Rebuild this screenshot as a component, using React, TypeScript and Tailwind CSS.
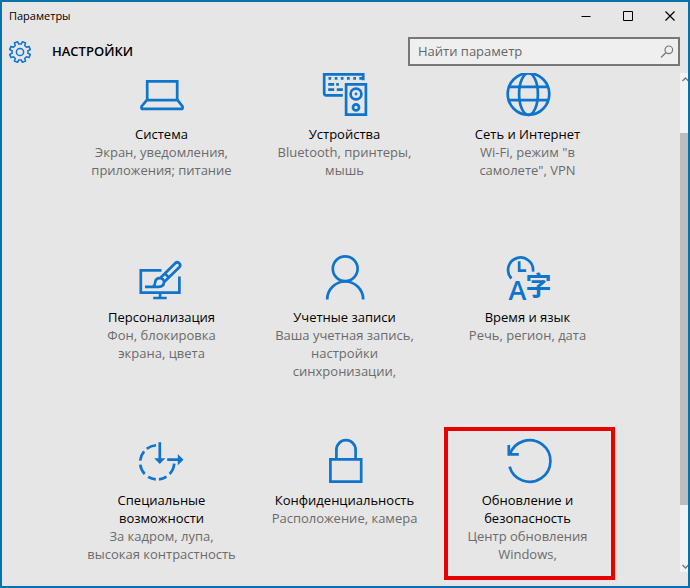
import { ReactNode } from 'react';

interface Category {
  title: string;
  description: string;
  icon: ReactNode;
  highlighted?: boolean;
}

// Outline of a cog, centred on 0,0
function cogPath(teeth: number, outer: number, inner: number) {
  const step = (Math.PI * 2) / teeth;
  const points: string[] = [];
  for (let i = 0; i < teeth; i++) {
    const mid = i * step - Math.PI / 2 + step / 2;
    [[inner, -0.3], [outer, -0.21], [outer, 0.21], [inner, 0.3]].forEach(([r, k]) => {
      const a = mid + k * step;
      points.push(`${(r * Math.cos(a)).toFixed(2)} ${(r * Math.sin(a)).toFixed(2)}`);
    });
  }
  return `M${points.join('L')}Z`;
}

function TileIcon({ children }: { children: ReactNode }) {
  return (
    <svg
      viewBox="0 0 44 44"
      className="h-11 w-11 shrink-0 overflow-visible text-[#0f74cb]"
      fill="none"
      stroke="currentColor"
      strokeWidth="2.7"
      aria-hidden="true"
    >
      {children}
    </svg>
  );
}

const categories: Category[] = [
  {
    title: 'Система',
    description: 'Экран, уведомления, приложения; питание',
    icon: (
      <TileIcon>
        <path d="M7.2 27V8.3h30V27" />
        <path d="M6.8 27.2h30.8l5 6.3v1.2q0 1.2-1.3 1.2H2.8q-1.3 0-1.3-1.2v-1.2z" strokeLinejoin="round" />
      </TileIcon>
    ),
  },
  {
    title: 'Устройства',
    description: 'Bluetooth, принтеры, мышь',
    icon: (
      <TileIcon>
        <path d="M19.8 22.3H3.2q-2 0-2-2V1.3h39v6" />
        <path d="M5.5 5.4h2.7M11.7 5.4h2.7M17.8 5.4h2.7M24 5.4h2.7M30.3 5.4H33M36.3 5.4H39M5.2 11.3h6M13.2 11.3h2.7M5.2 16.7h6M13.8 16.7h6" />
        <path d="M23.1 11.3h19.8v30.4H23.1z" />
        <circle cx="33" cy="21" r="5.4" />
        <circle cx="33" cy="21" r="1.4" fill="currentColor" stroke="none" />
        <circle cx="33" cy="34.4" r="3" />
      </TileIcon>
    ),
  },
  {
    title: 'Сеть и Интернет',
    description: 'Wi-Fi, режим "в самолете", VPN',
    icon: (
      <TileIcon>
        <circle cx="22.5" cy="21" r="20.8" />
        <ellipse cx="22.5" cy="21" rx="9.4" ry="20.8" />
        <path d="M3 13.9h39M3 27.2h39" />
      </TileIcon>
    ),
  },
  {
    title: 'Персонализация',
    description: 'Фон, блокировка экрана, цвета',
    icon: (
      <TileIcon>
        <path d="M21.5 14.3H.8v22.4h38.6V20.5M20.1 37v5M13.2 42h13.5" />
        <path d="M5 30.8h13.5c3.6 0 5.5-2 5.5-4.7 0-2.3-1.8-4-4.1-4-3 0-4.6 2-4.8 4.7-.1 2-.8 3.2-2.3 4" />
        <path d="M20.6 21.8 35.2 7.2a2.9 2.9 0 0 1 4.1 4.1L24.4 25.8M25 17.6l4 4" />
      </TileIcon>
    ),
  },
  {
    title: 'Учетные записи',
    description: 'Ваша учетная запись, настройки синхронизации,',
    icon: (
      <TileIcon>
        <circle cx="22.2" cy="12.8" r="12.4" />
        <path d="M4.2 43.5a18 18 0 0 1 36 0" />
      </TileIcon>
    ),
  },
  {
    title: 'Время и язык',
    description: 'Речь, регион, дата',
    icon: (
      <TileIcon>
        <path d="M5.4 22.5A12.5 12.5 0 1 1 27 15.6" />
        <path d="M13.2 5.3v9.4h7" />
        <g fill="currentColor" stroke="none">
          <text x="2.6" y="43.5" className="font-['Open_Sans'] text-[27px] font-semibold">A</text>
          <text x="19.6" y="39" className="font-['Noto_Sans_CJK_SC'] text-[26px] font-bold">字</text>
        </g>
      </TileIcon>
    ),
  },
  {
    title: 'Специальные возможности',
    description: 'За кадром, лупа, высокая контрастность',
    icon: (
      <TileIcon>
        <circle
          cx="17.2"
          cy="23.3"
          r="17.1"
          pathLength="360"
          strokeDasharray="38 14 27 11 27 15 35 14 34 12 34 99"
          strokeDashoffset="-5"
        />
        <path d="M19.8 3.2v18M27.2 20.7H39" />
        <path d="M14.2 19.3h11.2L19.8 25zM37.8 15v11.3l5.7-5.6z" fill="currentColor" stroke="none" />
      </TileIcon>
    ),
  },
  {
    title: 'Конфиденциальность',
    description: 'Расположение, камера',
    icon: (
      <TileIcon>
        <path d="M7.4 20.3h30.8v22.4H7.4zM13.4 20V10.8a9.6 9.6 0 0 1 19.2 0V20" />
      </TileIcon>
    ),
  },
  {
    title: 'Обновление и безопасность',
    description: 'Центр обновления Windows,',
    highlighted: true,
    icon: (
      <TileIcon>
        <path d="M3.6 27.6A20.8 20.8 0 1 0 3.9 15.4" />
        <path d="M2.8 6v9.3h10" />
      </TileIcon>
    ),
  },
];

function TitleBar() {
  return (
    <div className="flex h-7 shrink-0 items-center justify-between pr-1 pl-[7px] text-[11px] text-black">
      <span>Параметры</span>
      <div className="flex gap-3.5">
        <button className="flex h-7 w-7 items-center justify-center" aria-label="Свернуть">
          <svg className="h-3 w-3" viewBox="0 0 12 12" stroke="currentColor" aria-hidden="true">
            <path d="M1.5 6.5h9" />
          </svg>
        </button>
        <button className="flex h-7 w-7 items-center justify-center" aria-label="Развернуть">
          <svg className="h-3 w-3" viewBox="0 0 12 12" fill="none" stroke="currentColor" aria-hidden="true">
            <path d="M1.5 1.5h9v9h-9z" />
          </svg>
        </button>
        <button className="flex h-7 w-7 items-center justify-center" aria-label="Закрыть">
          <svg className="h-3 w-3" viewBox="0 0 12 12" stroke="currentColor" strokeWidth="1.2" aria-hidden="true">
            <path d="m1.5 1.5 9 9M10.5 1.5l-9 9" />
          </svg>
        </button>
      </div>
    </div>
  );
}

function Header() {
  return (
    <header className="flex shrink-0 items-center justify-between py-[7px] pr-2 pl-1.5">
      <div className="flex items-center gap-5">
        <svg className="h-6 w-6 text-[#0f74cb]" viewBox="-12 -12 24 24" fill="none" stroke="currentColor" strokeWidth="1.5" aria-hidden="true">
          <path d={cogPath(8, 10.6, 8)} strokeLinejoin="round" />
          <circle r="3.6" />
        </svg>
        <h1 className="text-[13px] font-semibold text-black">НАСТРОЙКИ</h1>
      </div>
      <label className="flex h-[29px] w-[272px] items-center border-2 border-[#777] bg-[#efefef] pr-1 pl-2">
        <input
          type="text"
          aria-label="Найти параметр"
          placeholder="Найти параметр"
          className="min-w-0 flex-1 bg-transparent text-[13px] text-black outline-none placeholder:text-[#666]"
        />
        <svg className="h-3.5 w-3.5 text-[#777]" viewBox="0 0 14 14" fill="none" stroke="currentColor" strokeWidth="1.2" aria-hidden="true">
          <circle cx="8.8" cy="4.8" r="3.8" />
          <path d="M6 7.5 1 12.5" />
        </svg>
      </label>
    </header>
  );
}

function Tile({ title, description, icon, highlighted }: Category) {
  return (
    <a href="#" className="relative flex flex-col items-center px-4 text-center text-[13px] leading-[18px]">
      {icon}
      <span className="mt-2 text-black">{title}</span>
      <span className="text-[#6b6b6b]">{description}</span>
      {highlighted && <span className="absolute -top-3 right-1 left-2 h-[153px] border-4 border-[#e60000]" />}
    </a>
  );
}

function ScrollBar() {
  return (
    <div className="mb-3.5 flex w-2 shrink-0 flex-col overflow-hidden bg-[#f2f2f2] text-[#777]">
      <svg className="h-3 w-3" viewBox="0 0 12 12" fill="none" stroke="currentColor" strokeWidth="1.4" aria-hidden="true">
        <path d="m2.5 8 3-3 3 3" />
      </svg>
      <div className="mt-12 mb-[55px] flex-1 bg-[#bdbdbd]" />
      <svg className="h-3 w-3" viewBox="0 0 12 12" fill="none" stroke="currentColor" strokeWidth="1.4" aria-hidden="true">
        <path d="m2.5 5 3 3 3-3" />
      </svg>
    </div>
  );
}

export default function App() {
  return (
    <div className="flex h-screen flex-col overflow-hidden border-2 border-[#0a70a8] bg-[#e6e6e6] font-['Open_Sans','Noto_Sans',sans-serif]">
      <TitleBar />
      <Header />
      <div className="flex min-h-0 flex-1">
        <main className="flex min-w-0 flex-1 justify-center overflow-hidden pl-[7px]">
          <div className="grid auto-rows-[183px] grid-cols-[repeat(3,183px)]">
            {categories.map((category) => (
              <Tile key={category.title} {...category} />
            ))}
          </div>
        </main>
        <ScrollBar />
      </div>
    </div>
  );
}
